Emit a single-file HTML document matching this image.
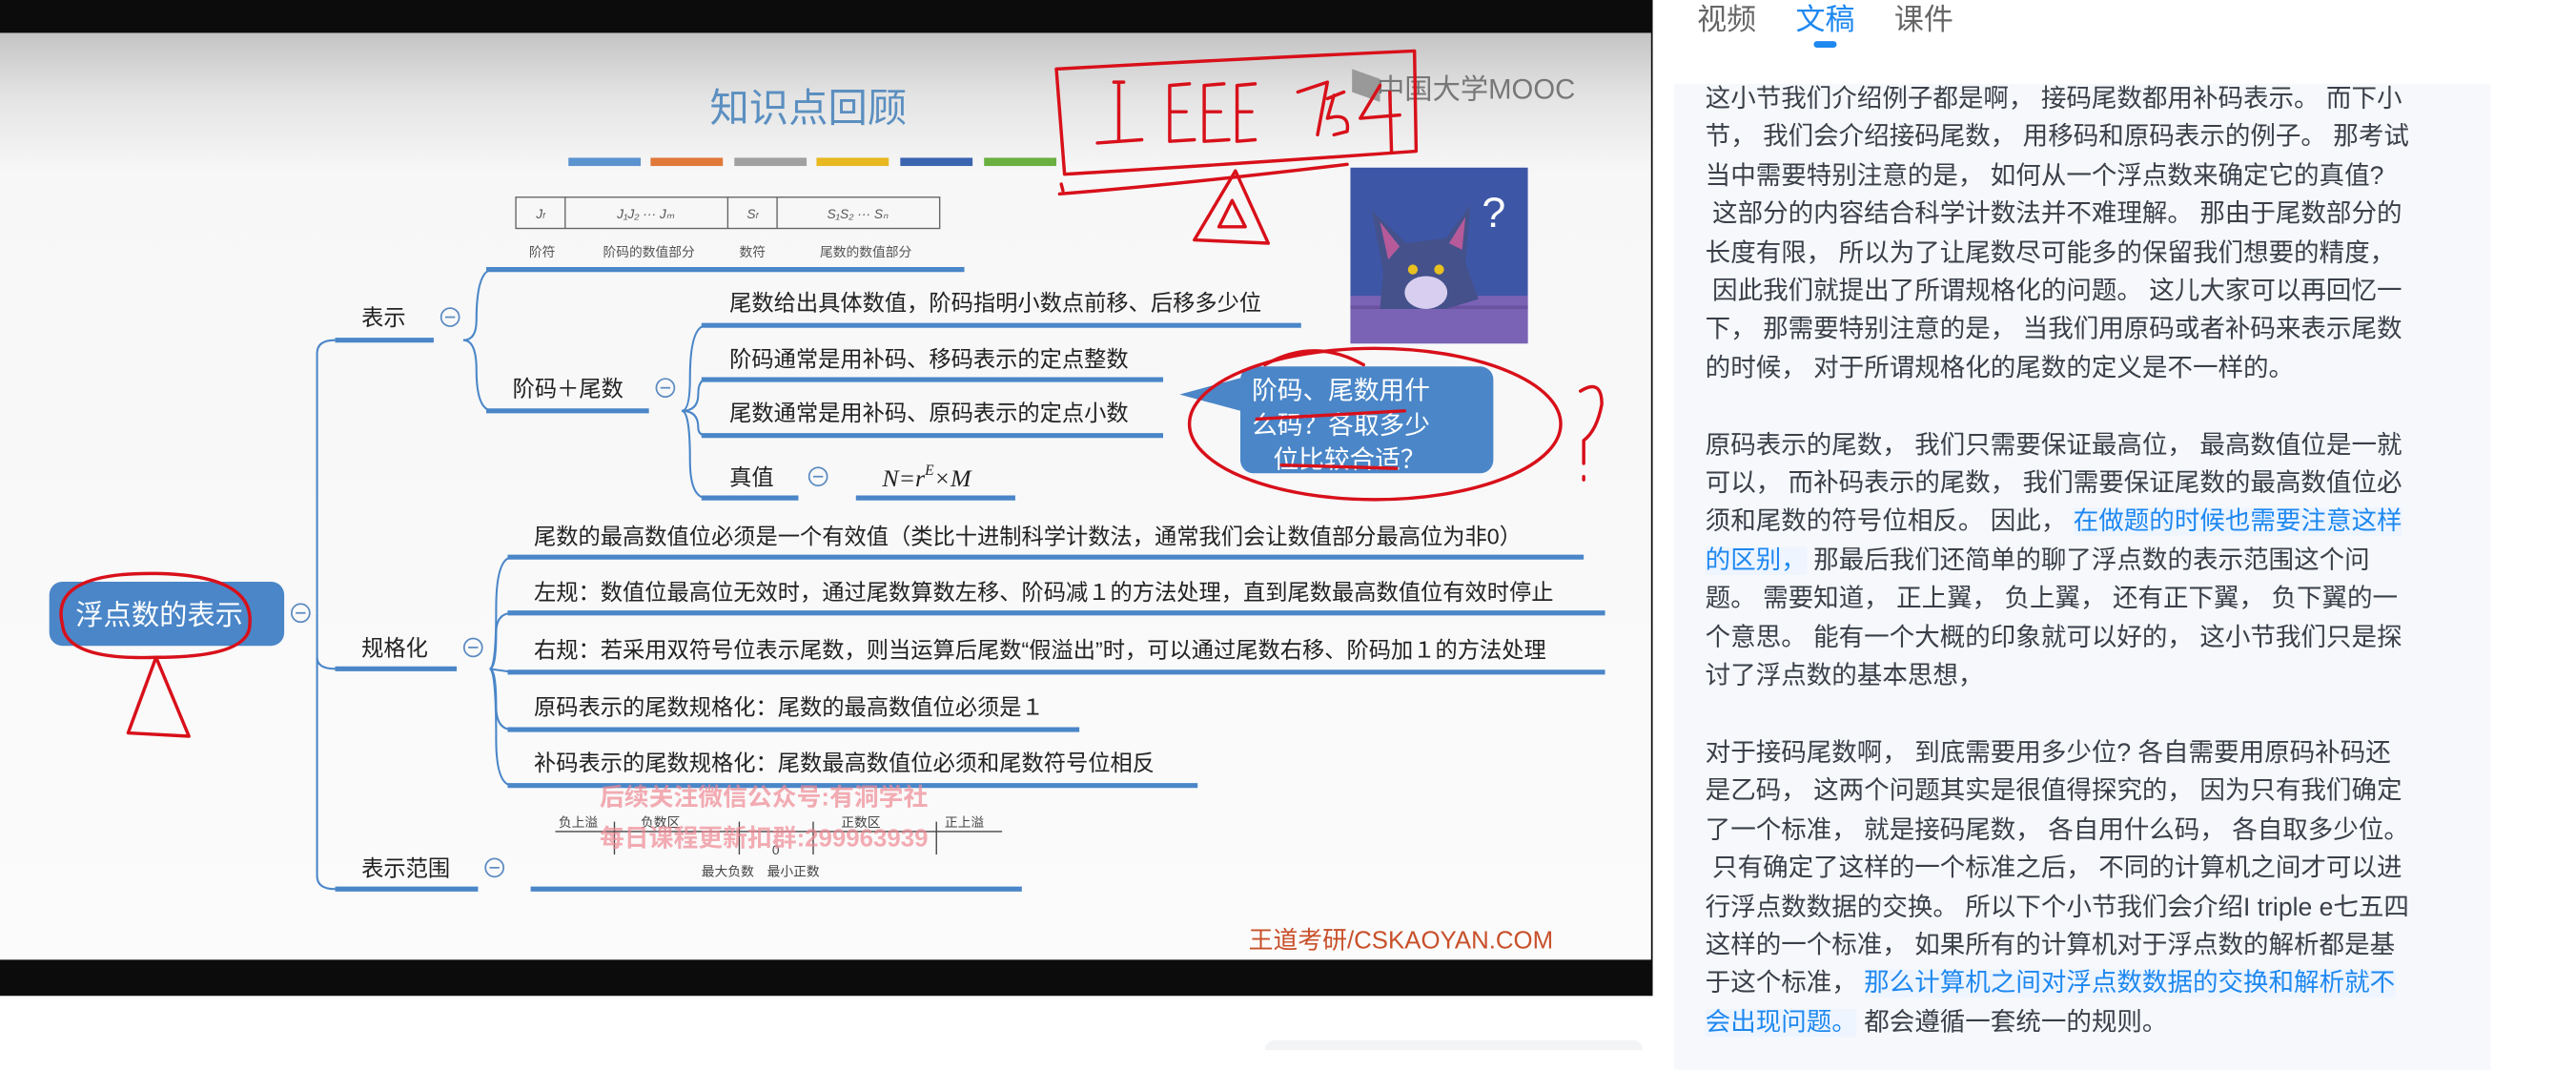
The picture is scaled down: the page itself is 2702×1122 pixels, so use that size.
<!DOCTYPE html>
<html><head><meta charset="utf-8">
<style>
html,body{margin:0;padding:0;width:2702px;height:1100px;overflow:hidden;background:#fff;}
#w{position:absolute;left:0;top:0;width:1568px;height:639px;transform:scale(1.7232);transform-origin:0 0;font-family:"Liberation Sans","Noto Sans CJK SC",sans-serif;}
.tabs{position:absolute;top:-2px;left:1033px;font-size:18px;color:#666;}
.tabs span{position:absolute;white-space:nowrap;}
.ul{position:absolute;left:1104px;top:25px;width:14px;height:4px;border-radius:2px;background:#1e88f0;}
.panel{position:absolute;left:1019px;top:51px;width:497px;height:600px;background:#f6f8fc;}
.txt{position:absolute;left:1038px;top:49px;font-size:15.4px;line-height:23.4px;color:#3a3f48;white-space:nowrap;}
.b{color:#1e88f0;background:#eef5ff;}
</style></head><body><div id="w">
<svg width="1010" height="639" style="position:absolute;left:0;top:0" font-family="Liberation Sans,Noto Sans CJK SC,sans-serif">
<defs><linearGradient id="g" x1="0" y1="0" x2="0" y2="1"><stop offset="0" stop-color="#c4c4c4"/><stop offset="0.07" stop-color="#e4e4e4"/><stop offset="0.15" stop-color="#f7f7f7"/><stop offset="1" stop-color="#fbfbfb"/></linearGradient></defs>
<rect x="0" y="0" width="1006" height="606" fill="#0c0c0c"/>
<rect x="0" y="20" width="1005" height="564" fill="url(#g)"/>
<rect x="770" y="633" width="230" height="12" rx="6" fill="#f3f4f6"/>
<text x="492" y="74" font-size="24" fill="#5b8fc0" text-anchor="middle">知识点回顾</text>
<g><rect x="346" y="96" width="44" height="5" fill="#5b93cf"/><rect x="396" y="96" width="44" height="5" fill="#e0783a"/><rect x="447" y="96" width="44" height="5" fill="#a0a0a0"/><rect x="497" y="96" width="44" height="5" fill="#e8b820"/><rect x="548" y="96" width="44" height="5" fill="#3a64b0"/><rect x="599" y="96" width="44" height="5" fill="#6ab040"/></g>
<path d="M823 42 L840 48 L840 62 L823 56 Z" fill="#999"/>
<text x="838" y="60" font-size="17" fill="#777">中国大学MOOC</text>
<!-- table -->
<g stroke="#666" fill="none" stroke-width="0.8"><rect x="314" y="120" width="258" height="19"/><line x1="344" y1="120" x2="344" y2="139"/><line x1="443" y1="120" x2="443" y2="139"/><line x1="473" y1="120" x2="473" y2="139"/></g>
<g font-size="8" fill="#555" font-style="italic" text-anchor="middle"><text x="329" y="133">J<tspan font-size="5">f</tspan></text><text x="393" y="133">J₁J₂ ··· Jₘ</text><text x="458" y="133">S<tspan font-size="5">f</tspan></text><text x="522" y="133">S₁S₂ ··· Sₙ</text></g>
<g font-size="8" fill="#555" text-anchor="middle"><text x="330" y="156">阶符</text><text x="395" y="156">阶码的数值部分</text><text x="458" y="156">数符</text><text x="527" y="156">尾数的数值部分</text></g>
<g stroke="#4a86c8" stroke-width="3" fill="none">
<line x1="296" y1="164" x2="587" y2="164"/>
<line x1="204" y1="207" x2="264" y2="207"/>
<line x1="296" y1="250" x2="395" y2="250"/>
<line x1="427" y1="198" x2="792" y2="198"/><line x1="427" y1="231" x2="708" y2="231"/><line x1="427" y1="265" x2="708" y2="265"/><line x1="427" y1="303" x2="486" y2="303"/><line x1="521" y1="303" x2="618" y2="303"/>
<line x1="204" y1="407" x2="278" y2="407"/>
<line x1="309" y1="339" x2="964" y2="339"/><line x1="309" y1="373" x2="977" y2="373"/><line x1="309" y1="409" x2="977" y2="409"/><line x1="309" y1="444" x2="657" y2="444"/><line x1="309" y1="478" x2="729" y2="478"/>
<line x1="204" y1="541" x2="291" y2="541"/><line x1="323" y1="541" x2="622" y2="541"/>
</g>
<g stroke="#4a86c8" stroke-width="1.2" fill="none">
<path d="M193 373 L193 215 Q193 207 204 207"/><path d="M193 373 L193 533 Q193 541 204 541"/><path d="M193 400 Q193 407 204 407"/>
<path d="M282 207 Q290 207 290 195 Q290 164 300 164"/><path d="M282 207 Q290 207 290 225 Q290 250 300 250"/>
<path d="M415 250 Q420 250 420 230 Q420 198 430 198"/><path d="M415 250 Q425 250 425 240 Q425 231 430 231"/><path d="M415 250 Q425 250 425 260 Q425 265 430 265"/><path d="M415 250 Q420 250 420 280 Q420 303 430 303"/>
<path d="M298 407 Q302 407 302 370 Q302 339 312 339"/><path d="M298 407 Q302 407 302 385 Q302 373 312 373"/><path d="M298 407 L312 409"/><path d="M298 407 Q302 407 302 430 Q302 444 312 444"/><path d="M298 407 Q302 407 302 450 Q302 478 312 478"/>
</g>
<g fill="none" stroke="#5a8ac0" stroke-width="1"><circle cx="274" cy="193" r="5.5"/><circle cx="405" cy="236" r="5.5"/><circle cx="498" cy="290" r="5.5"/><circle cx="288" cy="394" r="5.5"/><circle cx="301" cy="528" r="5.5"/><circle cx="183" cy="373" r="5.5"/></g>
<g stroke="#5a8ac0" stroke-width="1"><line x1="271" y1="193" x2="277" y2="193"/><line x1="402" y1="236" x2="408" y2="236"/><line x1="495" y1="290" x2="501" y2="290"/><line x1="285" y1="394" x2="291" y2="394"/><line x1="298" y1="528" x2="304" y2="528"/><line x1="180" y1="373" x2="186" y2="373"/></g>
<g font-size="13.5" fill="#222">
<text x="220" y="198">表示</text><text x="312" y="241">阶码＋尾数</text>
<text x="444" y="189">尾数给出具体数值，阶码指明小数点前移、后移多少位</text>
<text x="444" y="223">阶码通常是用补码、移码表示的定点整数</text>
<text x="444" y="256">尾数通常是用补码、原码表示的定点小数</text>
<text x="444" y="295">真值</text>
<text x="220" y="399">规格化</text>
<text x="325" y="331">尾数的最高数值位必须是一个有效值（类比十进制科学计数法，通常我们会让数值部分最高位为非0）</text>
<text x="325" y="365">左规：数值位最高位无效时，通过尾数算数左移、阶码减１的方法处理，直到尾数最高数值位有效时停止</text>
<text x="325" y="400">右规：若采用双符号位表示尾数，则当运算后尾数“假溢出”时，可以通过尾数右移、阶码加１的方法处理</text>
<text x="325" y="435">原码表示的尾数规格化：尾数的最高数值位必须是１</text>
<text x="325" y="469">补码表示的尾数规格化：尾数最高数值位必须和尾数符号位相反</text>
<text x="220" y="533">表示范围</text>
</g>
<text x="537" y="296" font-size="15" font-style="italic" font-family="Liberation Serif,serif" fill="#222">N=r<tspan dy="-7" font-size="9">E</tspan><tspan dy="7">×M</tspan></text>
<rect x="30" y="354" width="143" height="39" rx="8" fill="#4a86c8"/>
<text x="46" y="380" font-size="17" fill="#fff">浮点数的表示</text>
<!-- number line -->
<line x1="338" y1="506" x2="610" y2="506" stroke="#444" stroke-width="0.8"/>
<g stroke="#444" stroke-width="0.8"><line x1="374" y1="500" x2="374" y2="520"/><line x1="450" y1="500" x2="450" y2="520"/><line x1="495" y1="500" x2="495" y2="520"/><line x1="570" y1="500" x2="570" y2="520"/></g>
<g font-size="8" fill="#444"><text x="340" y="503">负上溢</text><text x="390" y="503">负数区</text><text x="512" y="503">正数区</text><text x="575" y="503">正上溢</text><text x="470" y="520">0</text><text x="427" y="533">最大负数　最小正数</text></g>
<g font-size="15" fill="#f08a95" opacity="0.7" font-weight="bold"><text x="365" y="490">后续关注微信公众号:有洞学社</text><text x="365" y="515">每日课程更新扣群:299963939</text></g>
<text x="760" y="577" font-size="15" fill="#c8502a">王道考研/CSKAOYAN.COM</text>
<!-- cat -->
<rect x="822" y="102" width="108" height="107" fill="#3d56a6"/>
<rect x="822" y="180" width="108" height="29" fill="#7a62b4"/>
<rect x="822" y="186" width="108" height="2" fill="#6a52a0"/>
<path d="M840 188 L842 165 L835 128 L856 148 L880 145 L895 125 L892 160 L900 182 L880 188 Z" fill="#45518a"/>
<path d="M840 135 L852 150 L845 158 Z M892 132 L882 148 L890 152 Z" fill="#b65a9a"/>
<ellipse cx="868" cy="178" rx="13" ry="10" fill="#d8cff0"/>
<circle cx="860" cy="164" r="3" fill="#e8c020"/><circle cx="876" cy="164" r="3" fill="#e8c020"/>
<text x="902" y="138" font-size="26" fill="#fff">?</text>
<!-- bubble -->
<path d="M718 240 L755 230 L755 250 Z" fill="#4a86c8"/>
<rect x="755" y="223" width="154" height="65" rx="8" fill="#4a86c8"/>
<g font-size="15.5" fill="#fff"><text x="762" y="243">阶码、尾数用什</text><text x="762" y="264">么码？各取多少</text><text x="775" y="285">位比较合适？</text></g>
<!-- red marks -->
<g stroke="#d8101a" stroke-width="2" fill="none" stroke-linecap="round" stroke-linejoin="round">
<path d="M643 42 Q750 36 861 31 L862 92 Q750 100 648 106 L643 42"/><path d="M646 112 L647 116 M645 118 Q720 112 820 100"/>
<path d="M678 50 L684 50 M681 50 L681 86 M668 87 L695 85"/>
<path d="M712 52 L712 86 L727 85 M712 52 L724 51 M712 68 L722 68"/>
<path d="M733 52 L733 86 L748 85 M733 52 L745 51 M733 68 L743 68"/>
<path d="M753 52 L753 86 L764 85 M753 52 L764 51 M753 68 L762 68"/>
<path d="M790 56 L808 50 L802 82"/><path d="M808 60 L818 56 M812 58 L808 72 Q822 68 820 80 L812 82"/>
<path d="M840 52 L828 72 L852 70 M846 56 L847 92"/>
<path d="M752 104 L727 146 L772 148 Z M750 122 L742 138 L758 138 Z"/>
<ellipse cx="837" cy="258" rx="113" ry="46"/>
<path d="M770 222 Q800 205 830 222"/><path d="M765 255 L855 250"/><path d="M780 283 L850 285"/>
<path d="M962 238 Q975 230 975 246 Q972 262 964 268 L964 282 M964 290 L964 292"/>
<path d="M38 380 Q30 348 95 349 Q155 350 152 380 Q152 400 95 400 Q40 402 38 380"/>
<path d="M95 400 L78 446 L115 448 Z"/>
</g>
</svg>
<div class="tabs"><span style="left:0">视频</span><span style="left:60px;color:#1e88f0">文稿</span><span style="left:120px">课件</span></div>
<div class="ul"></div>
<div class="panel"></div>
<div class="txt">这小节我们介绍例子都是啊，  接码尾数都用补码表示。 而下小<br>节，  我们会介绍接码尾数，  用移码和原码表示的例子。 那考试<br>当中需要特别注意的是，  如何从一个浮点数来确定它的真值?<br>&nbsp;这部分的内容结合科学计数法并不难理解。 那由于尾数部分的<br>长度有限，  所以为了让尾数尽可能多的保留我们想要的精度，<br>&nbsp;因此我们就提出了所谓规格化的问题。 这儿大家可以再回忆一<br>下，  那需要特别注意的是，  当我们用原码或者补码来表示尾数<br>的时候，  对于所谓规格化的尾数的定义是不一样的。<br><br>原码表示的尾数，  我们只需要保证最高位，  最高数值位是一就<br>可以，  而补码表示的尾数，  我们需要保证尾数的最高数值位必<br>须和尾数的符号位相反。 因此，  <span class="b">在做题的时候也需要注意这样</span><br><span class="b">的区别，</span>  那最后我们还简单的聊了浮点数的表示范围这个问<br>题。 需要知道，  正上翼，  负上翼，  还有正下翼，  负下翼的一<br>个意思。 能有一个大概的印象就可以好的，  这小节我们只是探<br>讨了浮点数的基本思想，<br><br>对于接码尾数啊，  到底需要用多少位?  各自需要用原码补码还<br>是乙码，  这两个问题其实是很值得探究的，  因为只有我们确定<br>了一个标准，  就是接码尾数，  各自用什么码，  各自取多少位。<br>&nbsp;只有确定了这样的一个标准之后，  不同的计算机之间才可以进<br>行浮点数数据的交换。 所以下个小节我们会介绍I triple e七五四<br>这样的一个标准，  如果所有的计算机对于浮点数的解析都是基<br>于这个标准，  <span class="b">那么计算机之间对浮点数数据的交换和解析就不</span><br><span class="b">会出现问题。</span>  都会遵循一套统一的规则。</div>
</div></body></html>
